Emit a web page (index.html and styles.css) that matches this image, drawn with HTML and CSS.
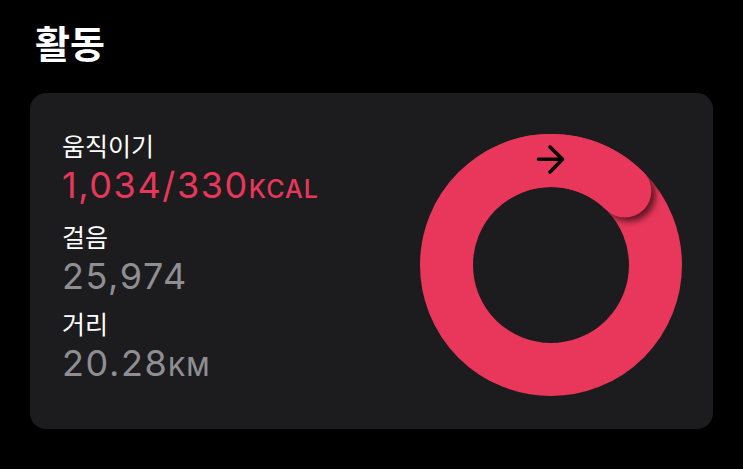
FILE: index.html
```html
<!DOCTYPE html>
<html lang="ko">
<head>
  <meta charset="UTF-8">
  <title>활동</title>
  <link rel="stylesheet" href="styles.css">
</head>
<body>
  <h1 class="title">활동</h1>

  <div class="card">
    <div class="stats">
      <div class="stat">
        <div class="label">움직이기</div>
        <div class="value move">1,034/330<span class="unit">kcal</span></div>
      </div>
      <div class="stat">
        <div class="label">걸음</div>
        <div class="value">25,974</div>
      </div>
      <div class="stat">
        <div class="label">거리</div>
        <div class="value">20.28<span class="unit">km</span></div>
      </div>
    </div>

    <svg class="ring" width="262" height="262" viewBox="0 0 262 262">
      <defs>
        <mask id="ringMask">
          <circle cx="131" cy="131" r="131" fill="white" />
          <circle cx="131" cy="131" r="78" fill="black" />
        </mask>
        <filter id="blur" x="-50%" y="-50%" width="200%" height="200%">
          <feGaussianBlur stdDeviation="3" />
        </filter>
      </defs>
      <!-- full ring -->
      <circle cx="131" cy="131" r="104.5" fill="none" stroke="#e8375a" stroke-width="53" />
      <!-- shadow under the end cap -->
      <g mask="url(#ringMask)">
        <circle cx="209" cy="61" r="26.5" fill="#000" opacity="0.6" filter="url(#blur)" />
      </g>
      <!-- overlapping lap with round end -->
      <path d="M 78.75 40.5 A 104.5 104.5 0 0 1 204.89 57.11" fill="none" stroke="#e8375a" stroke-width="53" stroke-linecap="round" />
      <!-- arrow -->
      <path d="M 118.5 25.3 H 142.5 M 130 13 L 142.5 25.3 L 130 38" fill="none" stroke="#000" stroke-width="3.6" stroke-linecap="round" stroke-linejoin="round" />
    </svg>
  </div>
</body>
</html>
```

FILE: styles.css
```css
body {
  margin: 0;
  background-color: #000;
  font-family: "Inter", "Noto Sans CJK KR", sans-serif;
  color: #fff;
}

.title {
  margin: 20px 0 0 35px;
  font-family: "Noto Sans CJK KR", sans-serif;
  font-size: 38px;
  font-weight: 700;
  line-height: 44px;
}

.card {
  margin: 29px 0 0 30px;
  width: 683px;
  height: 336px;
  box-sizing: border-box;
  padding: 37px 31px 0 32px;
  background-color: #1c1c1e;
  border-radius: 16px;
  display: flex;
  justify-content: space-between;
  align-items: flex-start;
}

.stat {
  margin-bottom: 12px;
}

.label {
  font-family: "Noto Sans CJK KR", sans-serif;
  font-size: 25px;
  line-height: 30px;
  color: #fff;
}

.value {
  margin-top: 5px;
  font-size: 36px;
  line-height: 40px;
  letter-spacing: 1.6px;
  color: #8e8e93;
}

.value.move {
  color: #e8375a;
}

.unit {
  font-size: 25px;
  font-weight: 500;
  text-transform: uppercase;
  letter-spacing: 1px;
}

.ring {
  margin-top: 4px;
  display: block;
}
```
